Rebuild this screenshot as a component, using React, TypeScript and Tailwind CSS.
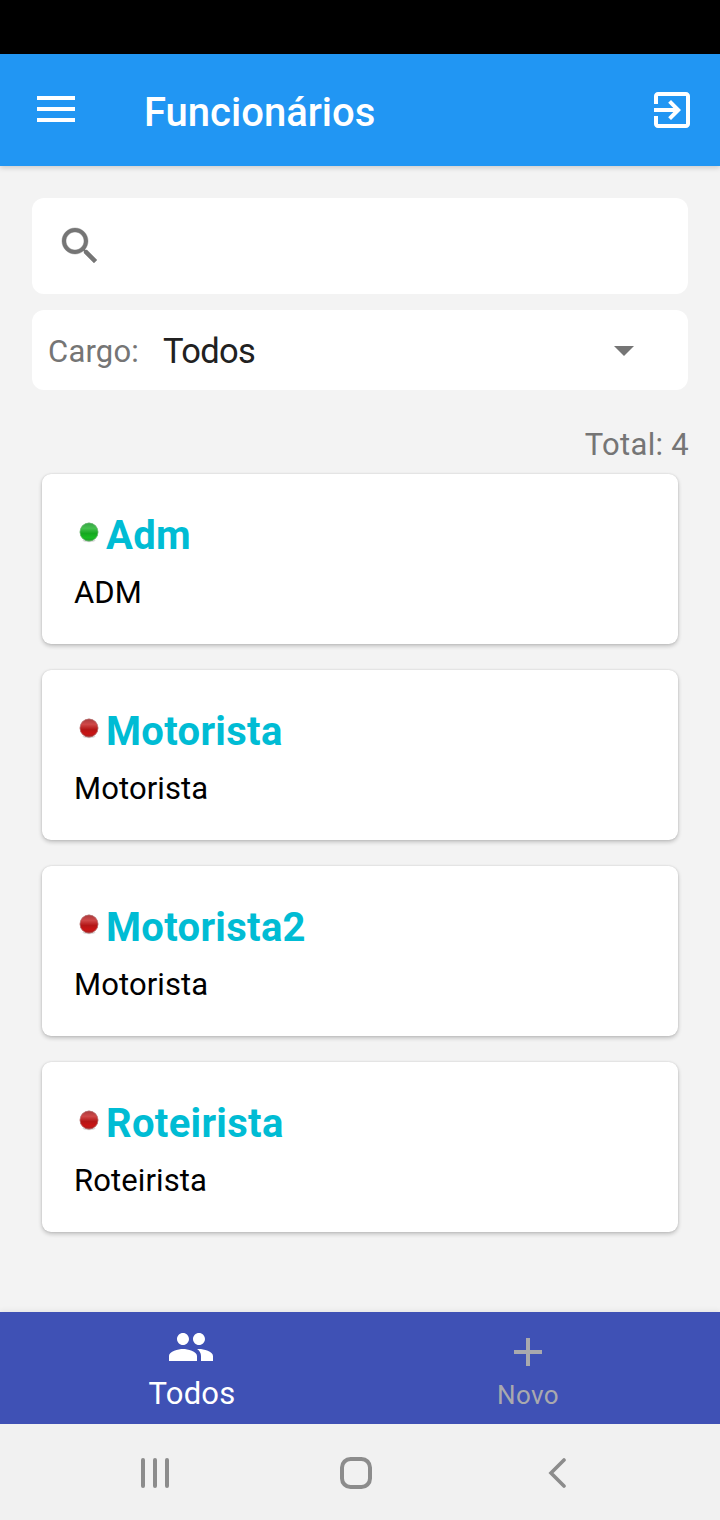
type Employee = { name: string; role: string; active: boolean };

const employees: Employee[] = [
  { name: 'Adm', role: 'ADM', active: true },
  { name: 'Motorista', role: 'Motorista', active: false },
  { name: 'Motorista2', role: 'Motorista', active: false },
  { name: 'Roteirista', role: 'Roteirista', active: false },
];

function StatusDot({ active }: { active: boolean }) {
  const id = active ? 'dot-on' : 'dot-off';
  return (
    <svg width="24" height="24" viewBox="0 0 24 24" className="ml-[2px] shrink-0 -translate-y-[3px]">
      <defs>
        <linearGradient id={id} x1="0" y1="0" x2="0" y2="1">
          <stop offset="0" stopColor={active ? '#35a545' : '#a83a3c'} />
          <stop offset="0.3" stopColor={active ? '#45c04e' : '#cf4848'} />
          <stop offset="0.58" stopColor={active ? '#16a820' : '#b41616'} />
          <stop offset="0.8" stopColor={active ? '#18bb22' : '#c81414'} />
          <stop offset="1" stopColor={active ? '#259a2c' : '#a52020'} />
        </linearGradient>
      </defs>
      <ellipse cx="12" cy="20.6" rx="6.5" ry="1.6" fill="#000" opacity="0.14" />
      <circle cx="12" cy="12" r="9.2" fill={`url(#${id})`} />
      <circle cx="12" cy="12" r="9" fill="none" stroke={active ? '#6fb575' : '#b57575'} strokeWidth="1" opacity="0.7" />
    </svg>
  );
}

function EmployeeCard({ name, role, active }: Employee) {
  return (
    <article className="h-[170px] rounded-[9px] bg-white pt-8 pl-8 shadow-[0_2px_4px_rgba(0,0,0,0.22),0_0_2px_rgba(0,0,0,0.12)]">
      <div className="flex h-[58px] items-center pl-[1px]">
        <StatusDot active={active} />
        <h2 className="ml-[5px] pt-[2px] text-[40px] leading-[56px] font-bold tracking-[0.3px] text-[#00bcd4]">{name}</h2>
      </div>
      <p className="text-[31px] leading-[58px] tracking-[0.1px] text-black">{role}</p>
    </article>
  );
}

export default function App() {
  return (
    <div className="flex h-[1520px] w-[720px] flex-col bg-[#f3f3f3] font-['Roboto',sans-serif]">
      <div className="h-[54px] bg-black" />
      <header className="z-10 flex h-[112px] items-center bg-[#2196f3] pr-6 pl-[37px] text-white shadow-[0_2px_5px_rgba(0,0,0,0.16)]">
        <svg width="38" height="26" viewBox="0 0 38 26" fill="currentColor" className="-translate-y-[1px]">
          <rect width="38" height="4" />
          <rect y="11" width="38" height="4" />
          <rect y="22" width="38" height="4" />
        </svg>
        <h1 className="ml-[69px] flex-1 pt-[6px] text-[40px] leading-[56px] font-medium">Funcionários</h1>
        <svg width="48" height="48" viewBox="0 0 24 24" fill="currentColor">
          <path d="M10.09 15.59L11.5 17l5-5-5-5-1.41 1.41L12.67 11H3v2h9.67l-2.58 2.59zM19 3H5c-1.11 0-2 .9-2 2v4h2V5h14v14H5v-4H3v4c0 1.1.89 2 2 2h14c1.1 0 2-.9 2-2V5c0-1.1-.9-2-2-2z" />
        </svg>
      </header>

      <main className="flex-1 px-8 pt-8">
        <div className="flex h-24 items-center rounded-xl bg-white pl-6">
          <svg width="48" height="48" viewBox="0 0 24 24" fill="#757575" stroke="#757575" strokeWidth="0.2">
            <path d="M15.5 14h-.79l-.28-.27C15.41 12.59 16 11.11 16 9.5 16 5.91 13.09 3 9.5 3S3 5.91 3 9.5 5.91 16 9.5 16c1.61 0 3.09-.59 4.23-1.57l.27.28v.79l5 4.99L20.49 19l-4.99-5zm-6 0C7.01 14 5 11.99 5 9.5S7.01 5 9.5 5 14 7.01 14 9.5 11.99 14 9.5 14z" />
          </svg>
        </div>
        <div className="mt-4 flex h-20 items-center rounded-xl bg-white pr-[54px] pl-4">
          <span className="w-[115px] pt-[3px] text-[31px] leading-10 tracking-[0.2px] text-[#757575]">Cargo:</span>
          <span className="flex-1 pt-[1px] text-[34.5px] leading-10 tracking-[-0.7px] text-[#212121]">Todos</span>
          <svg width="20" height="10" viewBox="0 0 20 10" fill="#757575" className="translate-y-[1px]">
            <path d="M0 0h20L10 10z" />
          </svg>
        </div>
        <p className="-mr-[1px] mt-9 h-12 text-right text-[31px] leading-[37px] tracking-[0.3px] text-[#757575]">Total: 4</p>
        <div className="flex flex-col gap-[26px] px-[10px]">
          {employees.map((e) => (
            <EmployeeCard key={e.name} {...e} />
          ))}
        </div>
      </main>

      <nav className="flex h-[112px] justify-center bg-[#3f51b5] shadow-[0_-2px_5px_rgba(0,0,0,0.05)]">
        <div className="flex w-[336px] flex-col items-center pt-[11px] pr-[2px] text-white">
          <svg width="48" height="48" viewBox="0 0 24 24" fill="currentColor">
            <path d="M16 11c1.66 0 2.99-1.34 2.99-3S17.66 5 16 5c-1.66 0-3 1.34-3 3s1.34 3 3 3zm-8 0c1.66 0 2.99-1.34 2.99-3S9.66 5 8 5C6.34 5 5 6.34 5 8s1.34 3 3 3zm0 2c-2.33 0-7 1.17-7 3.5V19h14v-2.5c0-2.33-4.67-3.5-7-3.5zm8 0c-.29 0-.62.02-.97.05 1.16.84 1.97 1.97 1.97 3.45V19h6v-2.5c0-2.33-4.67-3.5-7-3.5z" />
          </svg>
          <span className="mt-[3px] pl-[2px] text-[31px] leading-10 tracking-[0.2px]">Todos</span>
        </div>
        <div className="flex w-[336px] flex-col items-center pt-4 text-[#a9a9ae]">
          <svg width="48" height="48" viewBox="0 0 24 24" fill="currentColor">
            <path d="M19 13h-6v6h-2v-6H5v-2h6V5h2v6h6v2z" />
          </svg>
          <span className="text-[26px] leading-[38px] tracking-[0.4px]">Novo</span>
        </div>
      </nav>

      <footer className="flex h-24 items-center bg-[#f1f1f1] pt-[2px] pl-[141px]">
        <svg width="28" height="30" viewBox="0 0 28 30" stroke="#8c8c8c" strokeWidth="4" strokeLinecap="round">
          <path d="M2 2v26M14 2v26M26 2v26" />
        </svg>
        <svg width="32" height="32" viewBox="0 0 32 32" fill="none" stroke="#8c8c8c" strokeWidth="4" className="ml-[171px]">
          <rect x="2" y="2" width="28" height="28" rx="8.5" />
        </svg>
        <svg width="18" height="30" viewBox="0 0 18 30" fill="none" stroke="#8c8c8c" strokeWidth="3.6" strokeLinecap="round" className="ml-[176px]">
          <path d="M16 2L3 15l13 13" />
        </svg>
      </footer>
    </div>
  );
}
